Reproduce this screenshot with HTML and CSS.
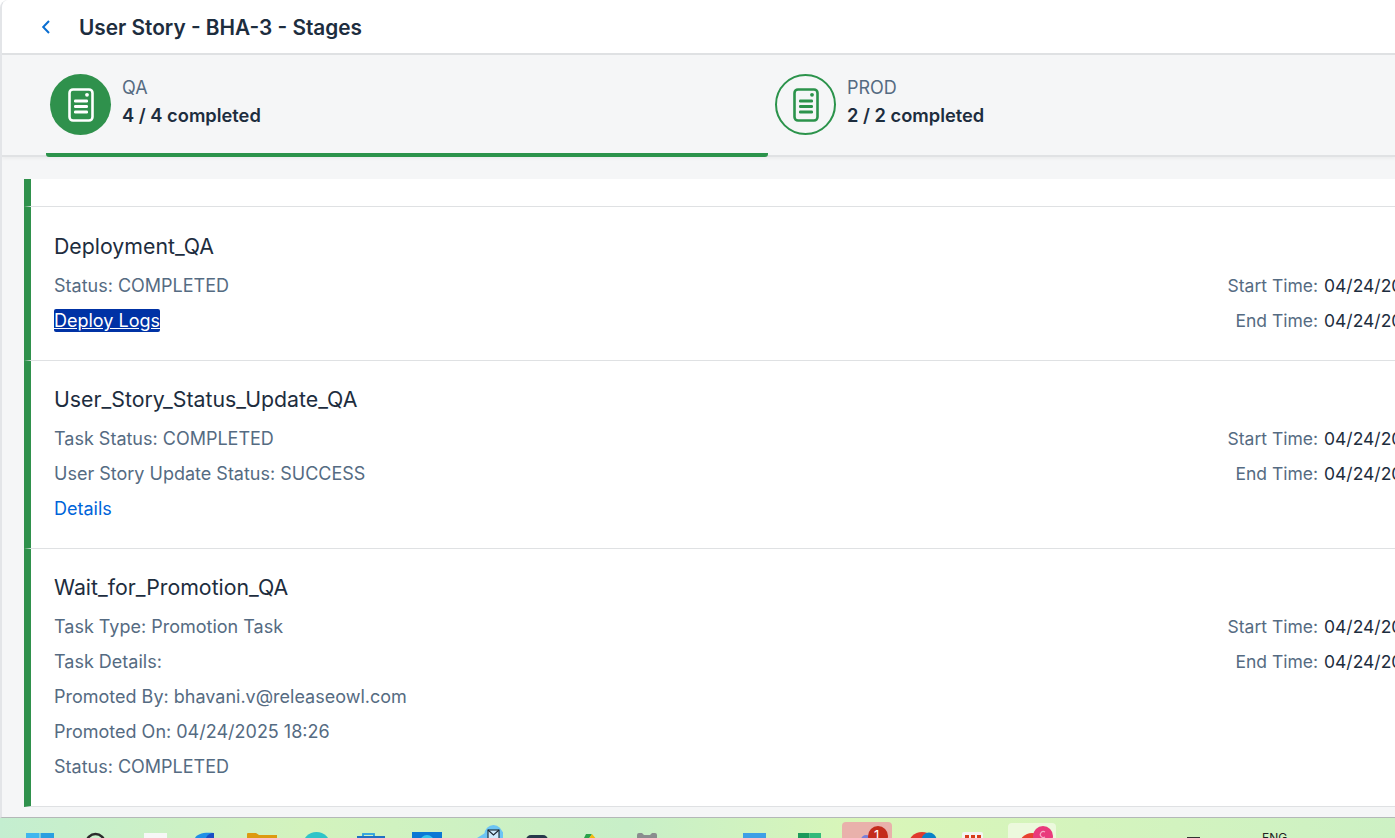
FILE: index.html
```html
<!DOCTYPE html>
<html lang="en">
<head>
<meta charset="utf-8">
<title>User Story - BHA-3 - Stages</title>
<link rel="stylesheet" href="styles.css">
</head>
<body>
<div class="window">
  <header class="topbar">
    <button class="back" aria-label="Back">
      <svg width="12" height="16" viewBox="0 0 12 16"><path d="M9 2 L3.2 8 L9 14" fill="none" stroke="#0a6ed1" stroke-width="2"/></svg>
    </button>
    <h1 class="title">User Story - BHA-3 - Stages</h1>
  </header>
  <nav class="tabs">
    <div class="tab tab-active">
      <span class="circle circle-solid">
        <svg width="26" height="34" viewBox="0 0 26 34"><rect x="1.5" y="1.5" width="23" height="31" rx="3.5" fill="none" stroke="#fff" stroke-width="2.6"/><circle cx="19" cy="6.8" r="1.9" fill="#fff"/><rect x="6" y="11.5" width="14" height="3" rx="1.2" fill="#fff"/><rect x="6" y="17" width="14" height="3" rx="1.2" fill="#fff"/><rect x="6" y="22.5" width="14" height="3" rx="1.2" fill="#fff"/></svg>
      </span>
      <div class="tab-text"><div class="tab-name">QA</div><div class="tab-count">4 / 4 completed</div></div>
    </div>
    <div class="tab">
      <span class="circle circle-outline">
        <svg width="26" height="34" viewBox="0 0 26 34"><rect x="1.5" y="1.5" width="23" height="31" rx="3.5" fill="none" stroke="#2b934b" stroke-width="2.6"/><circle cx="19" cy="6.8" r="1.9" fill="#2b934b"/><rect x="6" y="11.5" width="14" height="3" rx="1.2" fill="#2b934b"/><rect x="6" y="17" width="14" height="3" rx="1.2" fill="#2b934b"/><rect x="6" y="22.5" width="14" height="3" rx="1.2" fill="#2b934b"/></svg>
      </span>
      <div class="tab-text"><div class="tab-name">PROD</div><div class="tab-count">2 / 2 completed</div></div>
    </div>
  </nav>
  <main class="list">
    <section class="card card-stub"></section>
    <section class="card card-deploy">
      <div class="card-left">
        <h2 class="card-title">Deployment_QA</h2>
        <div class="line">Status: COMPLETED</div>
        <div class="line"><a class="link link-focus" href="#">Deploy Logs</a></div>
      </div>
      <dl class="times">
        <dt>Start Time:</dt><dd>04/24/2025 18:24</dd>
        <dt>End Time:</dt><dd>04/24/2025 18:25</dd>
      </dl>
    </section>
    <section class="card card-update">
      <div class="card-left">
        <h2 class="card-title">User_Story_Status_Update_QA</h2>
        <div class="line">Task Status: COMPLETED</div>
        <div class="line">User Story Update Status: SUCCESS</div>
        <div class="line"><a class="link" href="#">Details</a></div>
      </div>
      <dl class="times">
        <dt>Start Time:</dt><dd>04/24/2025 18:25</dd>
        <dt>End Time:</dt><dd>04/24/2025 18:25</dd>
      </dl>
    </section>
    <section class="card card-wait">
      <div class="card-left">
        <h2 class="card-title">Wait_for_Promotion_QA</h2>
        <div class="line">Task Type: Promotion Task</div>
        <div class="line">Task Details:</div>
        <div class="line">Promoted By: bhavani.v@releaseowl.com</div>
        <div class="line">Promoted On: 04/24/2025 18:26</div>
        <div class="line">Status: COMPLETED</div>
      </div>
      <dl class="times">
        <dt>Start Time:</dt><dd>04/24/2025 18:25</dd>
        <dt>End Time:</dt><dd>04/24/2025 18:26</dd>
      </dl>
    </section>
  </main>
</div>
<footer class="taskbar">
  <span class="slot"><svg class="tb" viewBox="0 0 55 20"><rect x="14" y="15" width="13.500" height="14" fill="#3fb6ee"/><rect x="28.500" y="15" width="13.500" height="14" fill="#2a9fe0"/></svg></span>
  <span class="slot"><svg class="tb" viewBox="0 0 55 20"><circle cx="28.500" cy="25" r="9" fill="none" stroke="#2b2b2b" stroke-width="2.500"/></svg></span>
  <span class="slot"><svg class="tb" viewBox="0 0 55 20"><rect x="22" y="15" width="23" height="10" fill="#f6f7f6"/></svg></span>
  <span class="slot"><svg class="tb" viewBox="0 0 55 20"><path d="M18 20 C20 16 26 14 37 15 L37 20 Z" fill="#1f8fe6"/><path d="M29 20 C30 17 33 15 37 15 L37 20 Z" fill="#1a4fc4"/></svg></span>
  <span class="slot"><svg class="tb" viewBox="0 0 55 20"><path d="M15 20 V16 Q15 15 16 15 H24 L27 17 H45 V20 Z" fill="#dd9a10"/></svg></span>
  <span class="slot"><svg class="tb" viewBox="0 0 55 20"><circle cx="29.500" cy="28" r="14" fill="#2fc4c8"/></svg></span>
  <span class="slot"><svg class="tb" viewBox="0 0 55 20"><rect x="21" y="16" width="11" height="6" fill="none" stroke="#2a9fe0" stroke-width="1.800"/><rect x="15" y="18" width="28" height="4" fill="#1f6fc4"/></svg></span>
  <span class="slot"><svg class="tb" viewBox="0 0 55 20"><rect x="15" y="14" width="30" height="8" fill="#0a78d4"/><circle cx="30" cy="24" r="7" fill="#35c4ee"/></svg></span>
  <span class="slot"><svg class="tb" viewBox="0 0 55 20"><path d="M25 20 L33 15 V14 L42 8 L51 14 V20 Z" fill="#6cc4f4"/><circle cx="41.500" cy="16" r="9" fill="#6cc4f4"/><rect x="36" y="12" width="11" height="9" fill="#cdeafc" stroke="#1b2530" stroke-width="1.100"/><path d="M36 12 L41.500 17 L47 12" fill="none" stroke="#1b2530" stroke-width="1.100"/></svg></span>
  <span class="slot"><svg class="tb" viewBox="0 0 55 20"><rect x="19" y="17" width="22" height="12" rx="5" fill="#26394a"/></svg></span>
  <span class="slot"><svg class="tb" viewBox="0 0 55 20"><path d="M24 16 L30 16 L26 22 L21 22 Z" fill="#2aa24a"/><path d="M30 16 L35 22 L26 22 Z" fill="#f3b90e"/></svg></span>
  <span class="slot"><svg class="tb" viewBox="0 0 55 20"><path d="M20 22 V17 Q20 15 22 15 H25 L27 17 H33 L35 15 H38 Q40 15 40 17 V22 Z" fill="#8a8d8e"/></svg></span>
  <span class="slot"></span>
  <span class="slot"><svg class="tb" viewBox="0 0 55 20"><rect x="16" y="15" width="23" height="8" fill="#3e9fe6"/></svg></span>
  <span class="slot"><svg class="tb" viewBox="0 0 55 20"><rect x="16" y="15" width="11.500" height="8" fill="#1c9a5a"/><rect x="27.500" y="15" width="11.500" height="8" fill="#33b97a"/></svg></span>
  <span class="slot slot-hot"><svg class="tb-tall" viewBox="0 0 50 16"><circle cx="24" cy="18" r="5" fill="#7a7fd8"/><circle cx="36" cy="14" r="10" fill="#c42b1c"/></svg><span class="badge">1</span></span>
  <span class="slot"><svg class="tb" viewBox="0 0 55 20"><circle cx="30" cy="28" r="14" fill="#e03a2e"/><circle cx="37" cy="22" r="7.500" fill="#0a82c8"/></svg></span>
  <span class="slot"><svg class="tb" viewBox="0 0 55 20"><rect x="15" y="14" width="21" height="8" rx="2" fill="#f3f4f2"/><rect x="18" y="17" width="4" height="5" fill="#d83b1a"/><rect x="24" y="17" width="4" height="5" fill="#d83b1a"/><rect x="30" y="17" width="4" height="5" fill="#d83b1a"/></svg></span>
  <span class="slot slot-open"><svg class="tb-tall" viewBox="0 0 48 15"><circle cx="24" cy="23" r="13" fill="#e8412f"/><circle cx="35" cy="13" r="10" fill="#e93a7c"/><path d="M37 9 A3 3 0 1 0 37 14" fill="none" stroke="#f6a8c6" stroke-width="1.200"/></svg></span>
  <span class="tray-mark"></span>
  <span class="tray">ENG</span>
</footer>
</body>
</html>
```
FILE: styles.css
```css
* { box-sizing: border-box; }
html, body { margin: 0; height: 838px; overflow: hidden; }
body {
  font-family: Inter, "Noto Sans", sans-serif;
  color: #1d2d3e;
  display: flex;
  flex-direction: column;
  width: 1395px;
}
.window {
  height: 818px;
  flex: none;
  background: #f5f6f7;
  border-left: 2px solid #e3e5e8;
  border-bottom: 1px solid #b4b8b8;
  overflow: hidden;
  border-top-left-radius: 8px;
}
.topbar {
  height: 55px;
  background: #fff;
  border-bottom: 2px solid #dfe1e3;
  display: flex;
  align-items: center;
  padding-left: 38px;
}
.back { width: 12px; height: 16px; padding: 0; margin: 0 27px 0 0; border: 0; background: none; display: flex; }
.title { margin: 3px 0 0; font-size: 20.800px; font-weight: 600; line-height: 26px; white-space: nowrap; }
.tabs {
  height: 102px;
  display: flex;
  padding-left: 44px;
  border-bottom: 2px solid #e0e2e4;
  box-shadow: 0 2px 3px rgba(0,0,0,.04);
}
.tab {
  flex: none;
  width: 600px;
  height: 102px;
  padding: 19px 0 0 4px;
  display: flex;
  gap: 11px;
}
.tab-active { width: 722px; border-bottom: 4px solid #2b934b; border-radius: 0 0 3px 3px; margin-right: 3px; }
.circle { width: 61px; height: 61px; border-radius: 50%; display: flex; align-items: center; justify-content: center; flex: none; }
.circle-solid { background: #2f914c; }
.circle-outline { border: 2px solid #2b934b; }
.tab-text { padding-top: 2px; }
.tab-name { font-size: 18px; line-height: 24px; color: #556b82; }
.tab-count { font-size: 18.300px; line-height: 30px; font-weight: 600; }
.list { margin: 22px 0 0 22px; width: 1400px; }
.card {
  background: #fff;
  border-left: 7px solid #2f914c;
  border-bottom: 1px solid #dfe1e3;
  display: flex;
  justify-content: space-between;
  padding: 23px 0 0 23px;
  width: 1400px;
}
.card-stub { height: 28px; padding: 0; }
.card-deploy { height: 154px; padding-top: 24px; }
.card-update { height: 188px; }
.card-wait { height: 258px; }
.card-title { margin: 0 0 7px; font-size: 21.300px; font-weight: 400; line-height: 30px; }
.line { font-size: 18px; line-height: 35px; color: #556b82; }
.times {
  margin: 0;
  padding-top: 37px;
  display: grid;
  grid-template-columns: max-content 100px;
  grid-auto-rows: 35px;
  column-gap: 6px;
  align-self: flex-start;
  white-space: nowrap;
  font-size: 17.500px;
  line-height: 35px;
}
.times dt { text-align: right; color: #556b82; }
.times dd { margin: 0; color: #1d2d3e; }
.link { color: #0064d9; text-decoration: none; }
.link-focus { background: #0032a5; color: #fff; text-decoration: underline; border-radius: 2px; padding: 1px 0; }
.taskbar {
  flex: 1;
  display: flex;
  padding-left: 12px;
  overflow: hidden;
  background: linear-gradient(90deg, #c4eed0 0%, #d3f3bd 22%, #c8efc8 45%, #d9f6b8 62%, #cdf1c4 100%);
}
.slot { width: 55px; height: 20px; flex: none; position: relative; }
.tb { display: block; width: 55px; height: 20px; }
.tb-tall { display: block; width: 100%; height: 100%; }
.slot-hot { background: #e9b1ab; border-radius: 4px 4px 0 0; margin: 4px 0 0 5px; width: 50px; height: 16px; }
.slot-open { background: #ecf9dd; border-radius: 4px 4px 0 0; margin: 5px 0 0 6px; width: 48px; height: 15px; }
.badge { position: absolute; left: 32px; top: 6px; font-size: 13px; line-height: 14px; color: #fff; }
.tray-mark { width: 13px; height: 1px; margin: 19px 0 0 131px; background: #333; flex: none; }
.tray { margin-left: 62px; font-size: 12px; line-height: 14px; padding-top: 13px; color: #222; }
```
